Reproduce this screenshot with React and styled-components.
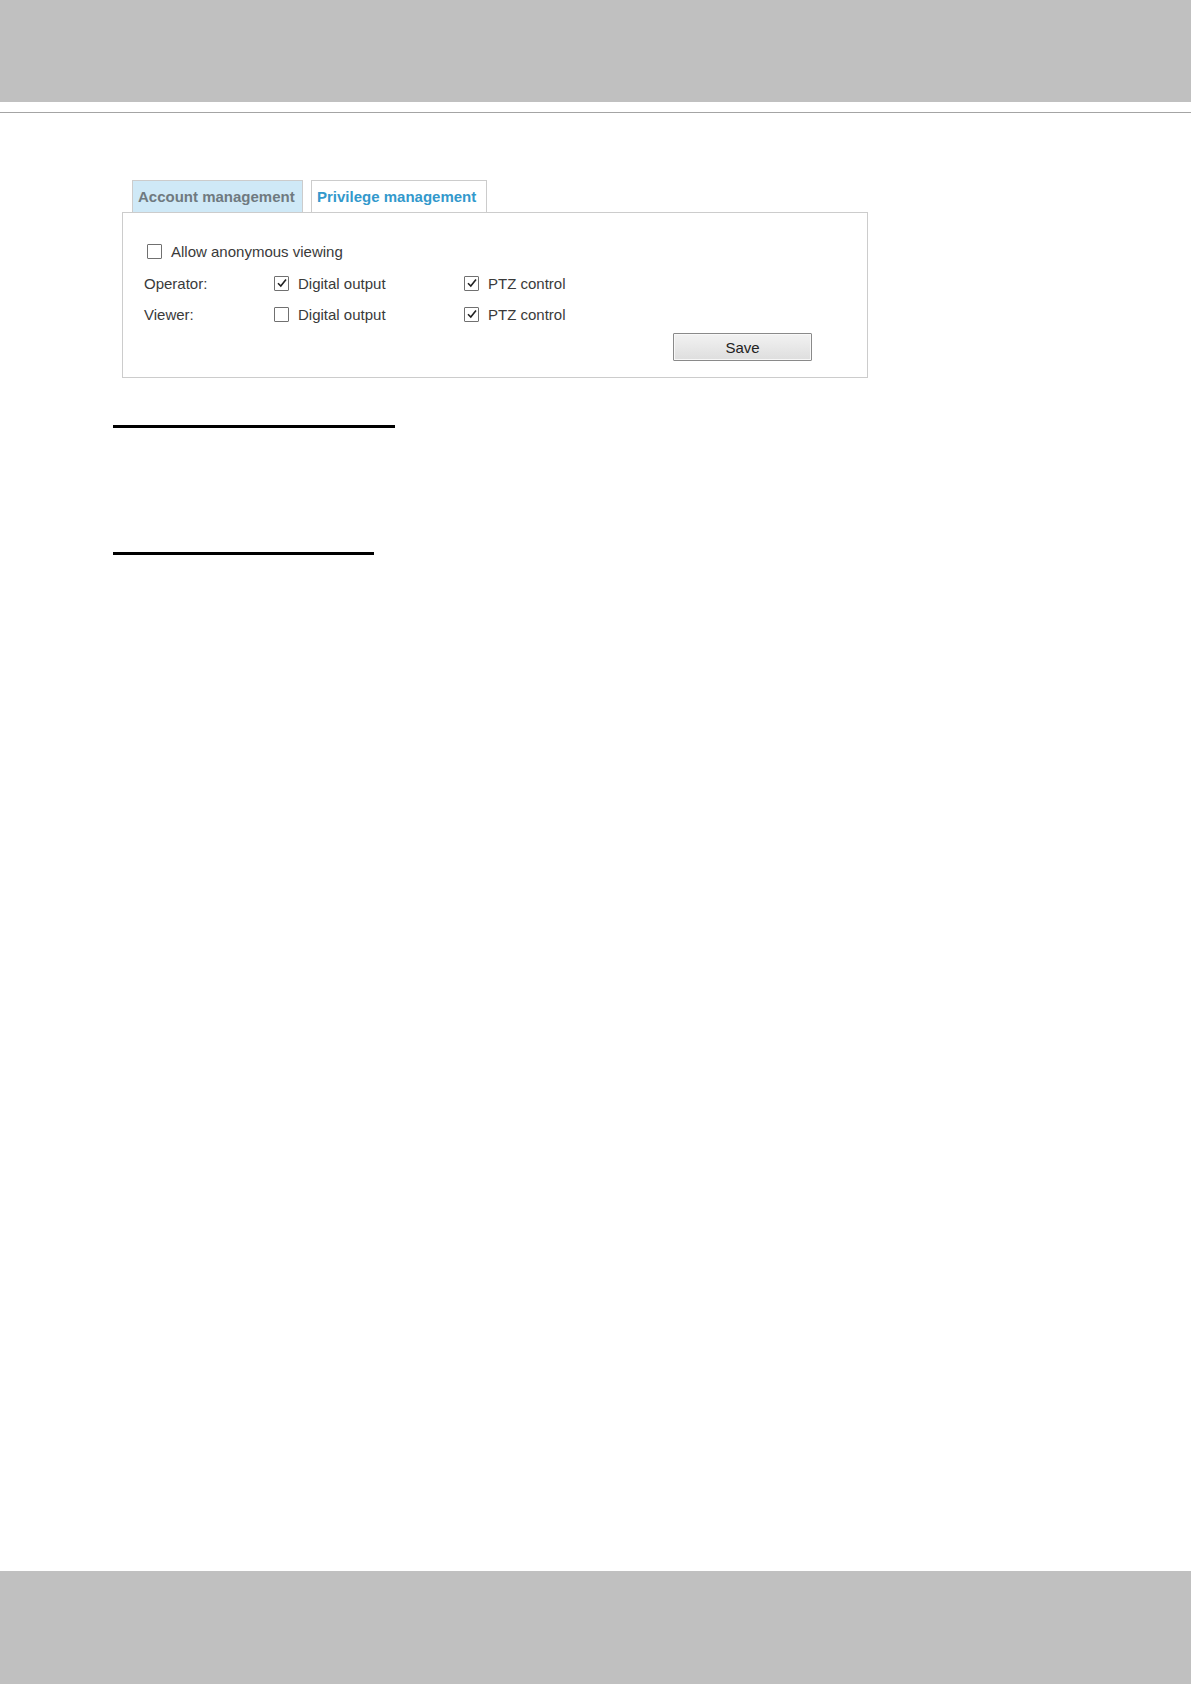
import styled, { createGlobalStyle } from "styled-components";

const GlobalStyle = createGlobalStyle`
  html, body {
    margin: 0;
    padding: 0;
    background: #ffffff;
    font-family: "Liberation Sans", Arial, sans-serif;
  }
`;

function CheckBox({ checked }) {
  return (
    <Box>
      {checked && (
        <svg width="12" height="12" viewBox="0 0 12 12">
          <path d="M2 6.2 L4.8 9 L10 2.6" fill="none" stroke="#222" strokeWidth="1.6" />
        </svg>
      )}
    </Box>
  );
}

const permissions = [
  { role: "Operator:", digital: true, ptz: true },
  { role: "Viewer:", digital: false, ptz: true },
];

function App() {
  return (
    <Page>
      <GlobalStyle />
      <TopBand />
      <Rule />
      <Main>
        <Tabs>
          <Tab $active={false}>Account management</Tab>
          <Tab $active>Privilege management</Tab>
        </Tabs>
        <Panel>
          <AnonRow>
            <CheckBox checked={false} />
            <Label>Allow anonymous viewing</Label>
          </AnonRow>
          {permissions.map((p) => (
            <PermRow key={p.role} $tall={p.role === "Operator:"}>
              <RoleName>{p.role}</RoleName>
              <Option $width={190}>
                <CheckBox checked={p.digital} />
                <Label>Digital output</Label>
              </Option>
              <Option>
                <CheckBox checked={p.ptz} />
                <Label>PTZ control</Label>
              </Option>
            </PermRow>
          ))}
          <Actions>
            <SaveButton type="button">Save</SaveButton>
          </Actions>
        </Panel>
        <Underline $width={282} $top={47} />
        <Underline $width={261} $top={124} />
      </Main>
      <BottomBand />
    </Page>
  );
}

const Page = styled.div`
  display: flex;
  flex-direction: column;
  min-height: 1684px;
`;

const TopBand = styled.div`
  height: 102px;
  background: #c0c0c0;
`;

const Rule = styled.div`
  margin-top: 10px;
  height: 1px;
  border-top: 1px solid #a4a4a4;
`;

const Main = styled.main`
  flex: 1;
  padding: 66px 0 0 113px;
`;

const Tabs = styled.div`
  display: flex;
  gap: 8px;
  padding-left: 19px;
`;

const Tab = styled.div`
  box-sizing: border-box;
  height: 32px;
  padding: 0 5px;
  display: flex;
  align-items: center;
  white-space: nowrap;
  overflow: hidden;
  border: 1px solid #cccccc;
  border-bottom: none;
  font-size: 15px;
  font-weight: bold;
  background: ${(p) => (p.$active ? "#ffffff" : "#cfe9f7")};
  color: ${(p) => (p.$active ? "#3399cc" : "#6f7a80")};
  width: ${(p) => (p.$active ? "176px" : "171px")};
`;

const Panel = styled.div`
  box-sizing: border-box;
  margin-left: 9px;
  width: 746px;
  height: 166px;
  border: 1px solid #cccccc;
  padding: 22px 55px 0 21px;
  display: flex;
  flex-direction: column;
`;

const AnonRow = styled.div`
  display: flex;
  align-items: center;
  height: 32px;
  padding-left: 3px;
`;

const PermRow = styled.div`
  display: flex;
  align-items: center;
  height: ${(p) => (p.$tall ? "32px" : "30px")};
`;

const RoleName = styled.span`
  width: 130px;
  font-size: 15px;
  color: #3a3a3a;
`;

const Option = styled.div`
  display: flex;
  align-items: center;
  width: ${(p) => (p.$width ? `${p.$width}px` : "auto")};
`;

const Box = styled.span`
  box-sizing: border-box;
  width: 15px;
  height: 15px;
  border: 1px solid #707070;
  border-radius: 1px;
  background: #ffffff;
  display: inline-flex;
  align-items: center;
  justify-content: center;
  margin-right: 9px;
`;

const Label = styled.span`
  font-size: 15px;
  color: #3a3a3a;
`;

const Actions = styled.div`
  display: flex;
  justify-content: flex-end;
  margin-top: 4px;
`;

const SaveButton = styled.button`
  box-sizing: border-box;
  width: 139px;
  height: 28px;
  border: 1px solid #8a8a8a;
  border-radius: 1px;
  background: linear-gradient(#f2f2f2, #dedede);
  box-shadow: inset 0 0 0 1px #f8f8f8;
  font-family: "Liberation Sans", Arial, sans-serif;
  font-size: 15px;
  color: #222222;
`;

const Underline = styled.div`
  width: ${(p) => p.$width}px;
  height: 3px;
  background: #000000;
  margin-top: ${(p) => p.$top}px;
`;

const BottomBand = styled.div`
  height: 113px;
  background: #c0c0c0;
`;

export default App;
